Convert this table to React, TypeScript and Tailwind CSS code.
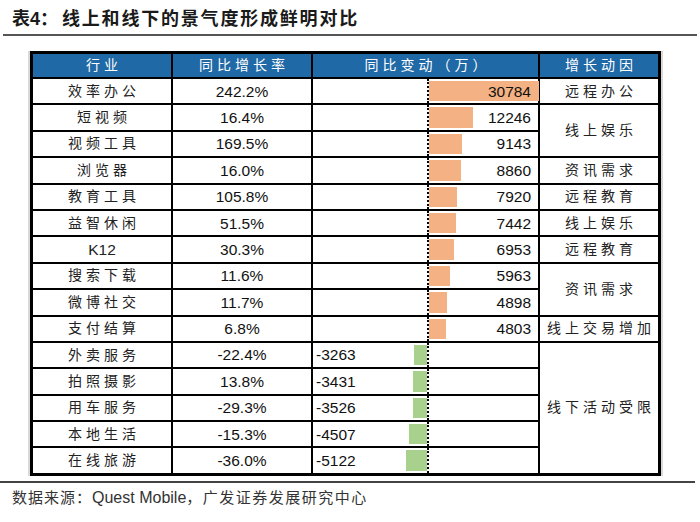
import { Fragment } from "react";

type Row = {
  name: string;
  growth: string;
  change: number;
  reason?: string;
  span?: number;
};

const rows: Row[] = [
  { name: "效率办公", growth: "242.2%", change: 30784, reason: "远程办公", span: 1 },
  { name: "短视频", growth: "16.4%", change: 12246, reason: "线上娱乐", span: 2 },
  { name: "视频工具", growth: "169.5%", change: 9143 },
  { name: "浏览器", growth: "16.0%", change: 8860, reason: "资讯需求", span: 1 },
  { name: "教育工具", growth: "105.8%", change: 7920, reason: "远程教育", span: 1 },
  { name: "益智休闲", growth: "51.5%", change: 7442, reason: "线上娱乐", span: 1 },
  { name: "K12", growth: "30.3%", change: 6953, reason: "远程教育", span: 1 },
  { name: "搜索下载", growth: "11.6%", change: 5963, reason: "资讯需求", span: 2 },
  { name: "微博社交", growth: "11.7%", change: 4898 },
  { name: "支付结算", growth: "6.8%", change: 4803, reason: "线上交易增加", span: 1 },
  { name: "外卖服务", growth: "-22.4%", change: -3263, reason: "线下活动受限", span: 5 },
  { name: "拍照摄影", growth: "13.8%", change: -3431 },
  { name: "用车服务", growth: "-29.3%", change: -3526 },
  { name: "本地生活", growth: "-15.3%", change: -4507 },
  { name: "在线旅游", growth: "-36.0%", change: -5122 },
];

const spanClass: Record<number, string> = {
  1: "row-span-1",
  2: "row-span-2",
  5: "row-span-5",
};

function ChangeCell({ value }: { value: number }) {
  const positive = value > 0;
  return (
    <div className="flex bg-white">
      <div className="relative w-[116px] border-r-2 border-dotted border-black flex items-center">
        {!positive && (
          <>
            <div
              className="absolute right-0 top-[2px] bottom-[2px] bg-[#a9d18e]"
              style={{ width: Math.round(-value * 0.0041) }}
            />
            <span className="relative pl-[3px] text-[15.5px] text-[#111]">{value}</span>
          </>
        )}
      </div>
      <div className="relative flex-1 flex items-center justify-end">
        {positive && (
          <>
            <div
              className="absolute left-0 top-[2px] bottom-[2px] bg-[#f4b183]"
              style={{ width: Math.round(value * 0.00358) }}
            />
            <span className="relative pr-[7px] text-[15.5px] text-[#111]">{value}</span>
          </>
        )}
      </div>
    </div>
  );
}

export default function App() {
  return (
    <div className="w-[700px] h-[522px] bg-white font-['Liberation_Sans','Noto_Sans_CJK_SC',sans-serif] text-[#111]">
      {/* Title */}
      <div className="h-[34px] pl-[12px] pt-[8px] text-[18px] leading-[22px] font-bold text-[#1a1a1a]">
        <span>表4：</span>
        <span className="ml-[4px] tracking-[1.8px]">线上和线下的景气度形成鲜明对比</span>
      </div>
      <div className="mx-[3px] h-[2px] bg-[#555]" />

      {/* Table */}
      <div className="pt-[15px] pl-[28px]">
        <div className="w-fit border-x-2 border-[#d9d9d9]">
          <div className="grid grid-cols-[138px_138px_225px_118px] grid-rows-[23px_repeat(15,24.4px)] gap-[2px] border-[3px] border-black bg-black">
            {["行业", "同比增长率", "同比变动（万）", "增长动因"].map((h) => (
              <div
                key={h}
                className="flex items-center justify-center bg-[#1f69a6] pl-[4px] text-[14px] tracking-[4px] text-white"
              >
                {h}
              </div>
            ))}
            {rows.map((r) => (
              <Fragment key={r.name}>
                <div
                  className={`flex items-center justify-center bg-white text-[#222] ${
                    r.name === "K12" ? "text-[15.5px]" : "pl-[4px] text-[14px] tracking-[4px]"
                  }`}
                >
                  {r.name}
                </div>
                <div className="flex items-center justify-center bg-white text-[15.5px]">
                  {r.growth}
                </div>
                <ChangeCell value={r.change} />
                {r.reason && (
                  <div
                    className={`flex items-center justify-center bg-white pl-[4px] text-[14px] tracking-[4px] text-[#222] ${
                      spanClass[r.span ?? 1]
                    }`}
                  >
                    {r.reason}
                  </div>
                )}
              </Fragment>
            ))}
          </div>
        </div>
      </div>

      {/* Footer */}
      <div className="mt-[5px] mr-[5px] h-[2px] bg-[#444]" />
      <div className="mt-[5px] pl-[12px] text-[15px] leading-[20px] text-[#333]">
        <span className="tracking-[1px]">数据来源：</span>
        <span className="text-[16px]">Quest Mobile</span>
        <span className="tracking-[1.5px]">，广发证券发展研究中心</span>
      </div>
    </div>
  );
}
